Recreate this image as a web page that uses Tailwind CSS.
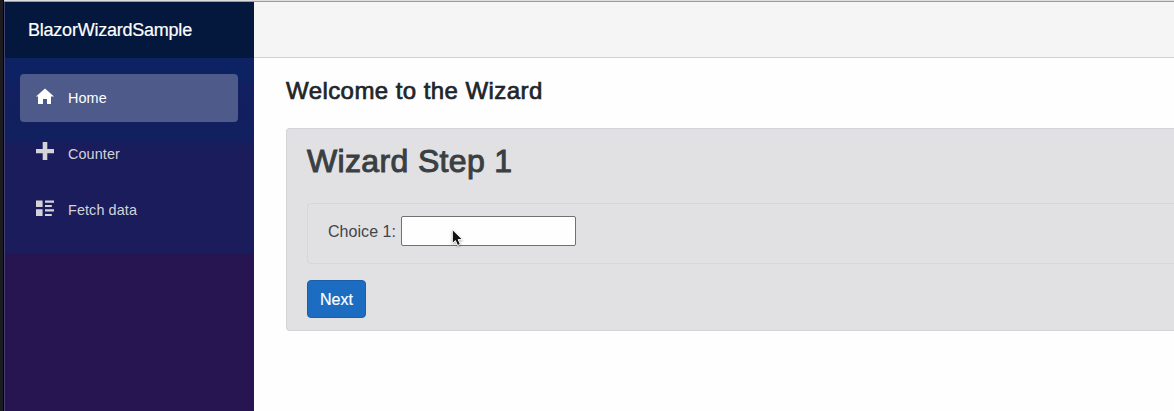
<!DOCTYPE html>
<html lang="en">
<head>
<meta charset="utf-8">
<title>BlazorWizardSample</title>
<script src="https://cdn.jsdelivr.net/npm/@tailwindcss/browser@4"></script>
</head>
<body class="h-[411px] overflow-hidden bg-[#fefefe] font-['Liberation_Sans',Arial,sans-serif] text-base text-[#212529]">
<div class="flex h-full">
  <div class="w-1 shrink-0 border-r border-black bg-[#1b1c1e]"></div>
  <div class="flex min-w-0 flex-1 flex-col">
    <div class="h-0.5 shrink-0 border-b border-[#9b9b9b] bg-[#dedede]"></div>
    <div class="flex min-h-0 flex-1">
      <aside class="w-[250px] shrink-0 border-l border-[#474176] bg-[linear-gradient(180deg,#0d2262_0,#0d2262_80px,#121f60_84px,#11205f_136px,#1b1c5b_146px,#1b1c5b_251px,#261551_252px)]">
        <div class="flex h-14 items-center bg-[#04173c] pl-[23px] text-[18px] tracking-[-0.23px] text-white [-webkit-text-stroke:0.2px_#fff]">BlazorWizardSample</div>
        <nav class="flex flex-col gap-2 py-4 pr-4 pl-[15px] text-[14.4px] tracking-[0.1px] text-[#d3d3d8]">
          <a class="flex h-12 items-center rounded bg-[#4d5a8a] pl-4 text-white">
            <svg class="mr-[14px] h-[18px] w-[18px] -translate-y-px" viewBox="0 0 18 18" fill="currentColor"><path d="M9 .5 0 8.5h2V16h5v-5h4v5h4V8.5h3z"/></svg><span class="pt-0.5">Home</span></a>
          <a class="flex h-12 items-center pl-4">
            <svg class="mr-[14px] h-[18px] w-[18px] -translate-y-[3px]" viewBox="0 0 18 18" fill="currentColor"><path d="M6.7 0h4.6v7H18v4.3h-6.7V18H6.7v-6.7H0V7h6.7z"/></svg><span class="pt-0.5">Counter</span></a>
          <a class="flex h-12 items-center pl-4">
            <svg class="mr-[14px] h-[18px] w-[18px] -translate-y-px" viewBox="0 0 18 18" fill="currentColor"><path d="M0 .5h6.6V7H0zM0 9.3h6.6V16H0zM9 .5h9v2.2H9zM9 5h6.8v2H9zM9 9.3h9v2.2H9zM9 14h6.8v2H9z"/></svg><span class="pt-0.5">Fetch data</span></a>
        </nav>
      </aside>
      <main class="min-w-0 flex-1">
        <div class="h-14 border-b border-[#d3d3d6] bg-[#f5f5f5]"></div>
        <div class="pl-8">
          <h3 class="pt-[18px] text-2xl leading-[29px] tracking-[0.43px] whitespace-nowrap [-webkit-text-stroke:0.7px_#212529]">Welcome to the Wizard</h3>
          <section class="mt-[23px] h-[203px] rounded-l border border-r-0 border-[#d3d3d8] bg-[#e1e1e3] pl-5">
            <h1 class="pt-[13px] text-[32px] leading-[38px] tracking-[0.35px] whitespace-nowrap text-[#3a3f43] [-webkit-text-stroke:1px_#3a3f43]">Wizard Step 1</h1>
            <div class="mt-[23px] flex h-[61px] items-start rounded-l border border-r-0 border-[#d7d7da] pt-3 pl-5 text-[#414549]">
              <label for="choice" class="mr-[5px] w-[68px] leading-[31px] tracking-[0.05px] whitespace-nowrap">Choice 1:</label>
              <input id="choice" type="text" class="h-[30px] w-[175px] rounded-xs border border-[#717174] bg-[#fefefe] px-1">
            </div>
            <button class="mt-4 block h-[38px] w-[59px] rounded border border-[#195fac] bg-[#1c6cc2] pt-0.5 text-base text-white [-webkit-text-stroke:0.2px_#fff]">Next</button>
          </section>
        </div>
      </main>
    </div>
  </div>
</div>
<svg class="absolute top-[228px] left-[450px] h-[20px] w-[16px] drop-shadow-[0_1px_1px_rgba(0,0,0,0.3)]" viewBox="0 0 16 20"><path d="M2.3 1.5v14l3.1-2.9 2.2 4.9 2.8-1.2-2.2-4.7h4.3z" fill="#111" stroke="#fff" stroke-width="1"/></svg>
</body>
</html>
